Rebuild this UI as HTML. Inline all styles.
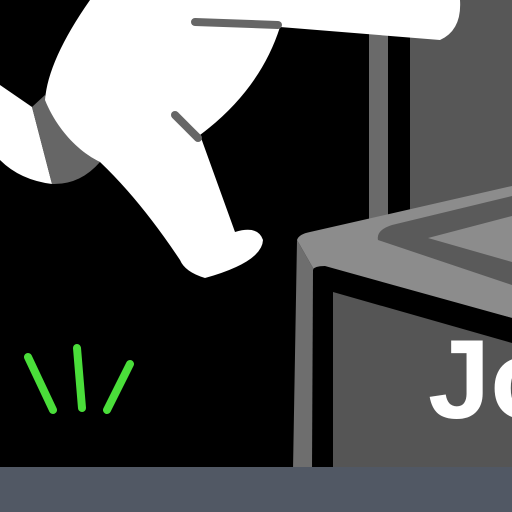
<!DOCTYPE html>
<html><head><style>html,body{margin:0;padding:0;width:512px;height:512px;overflow:hidden;background:#000}</style></head>
<body>
<svg width="512" height="512" viewBox="0 0 512 512" xmlns="http://www.w3.org/2000/svg">
<rect width="512" height="512" fill="#000"/>
<rect x="410" y="0" width="102" height="300" fill="#575757"/>
<rect x="369" y="0" width="19" height="300" fill="#6a6a6a"/>
<path d="M297,240 Q299,234 310,232 L512,186 L512,318 L313,268 Z" fill="#8c8c8c"/>
<path d="M378,240 Q376,230 392,225 L512,196 L512,285 Z" fill="#5a5a5a"/>
<path d="M428,238 L512,216 L512,262 Z" fill="#8c8c8c"/>
<path d="M297,240 L313,268 L512,318 L512,470 L293,470 Z" fill="#6e6e6e"/>
<path d="M313,270 Q314,266 325,266 L512,318 L512,470 L312,470 Z" fill="#000"/>
<path d="M333,292 L512,343 L512,470 L333,470 Z" fill="#555"/>
<text x="428" y="418" font-family="Liberation Sans, sans-serif" font-weight="bold" font-size="112" fill="#fff">Jo</text>
<rect x="0" y="467" width="512" height="45" fill="#515864"/>
<path d="M0,85 L32,107 L52,184 Q20,180 0,160 Z" fill="#fff"/>
<path d="M32,107 L45,95 C55,125 75,150 100,162 Q80,185 52,184 Z" fill="#666"/>
<path d="M90,0 L460,0 Q462,30 440,40 L280,27 Q260,90 200,135 L235,232 Q258,225 263,240 Q262,262 205,278 Q185,272 180,260 Q140,200 100,162 C75,150 55,125 45,100 Q48,60 90,0 Z" fill="#fff"/>
<path d="M195,22 L278,25" stroke="#666" stroke-width="8" stroke-linecap="round"/>
<path d="M175,115 L198,138" stroke="#666" stroke-width="8" stroke-linecap="round"/>
<g stroke="#4ade3a" stroke-width="8" stroke-linecap="round">
<path d="M28,357 L53,410"/>
<path d="M77,348 L82,408"/>
<path d="M130,364 L107,410"/>
</g>
</svg>
</body></html>
